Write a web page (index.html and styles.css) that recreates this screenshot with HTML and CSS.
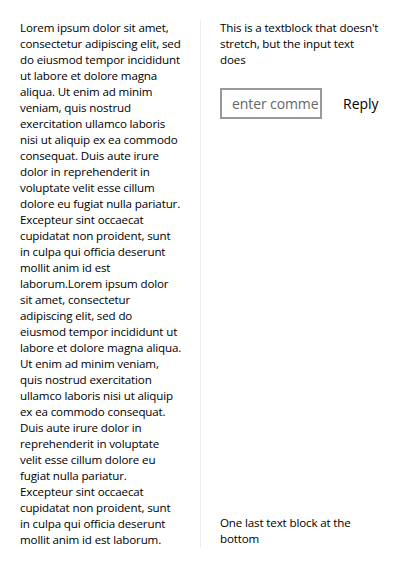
FILE: index.html
```html
<!DOCTYPE html>
<html>
<head>
<meta charset="utf-8">
<link rel="stylesheet" href="styles.css">
</head>
<body>
<div class="page">
  <div class="left">
    <p class="body-text">Lorem ipsum dolor sit amet,<br>consectetur adipiscing elit, sed<br>do eiusmod tempor incididunt<br>ut labore et dolore magna<br>aliqua. Ut enim ad minim<br>veniam, quis nostrud<br>exercitation ullamco laboris<br>nisi ut aliquip ex ea commodo<br>consequat. Duis aute irure<br>dolor in reprehenderit in<br>voluptate velit esse cillum<br>dolore eu fugiat nulla pariatur.<br>Excepteur sint occaecat<br>cupidatat non proident, sunt<br>in culpa qui officia deserunt<br>mollit anim id est<br>laborum.Lorem ipsum dolor<br>sit amet, consectetur<br>adipiscing elit, sed do<br>eiusmod tempor incididunt ut<br>labore et dolore magna aliqua.<br>Ut enim ad minim veniam,<br>quis nostrud exercitation<br>ullamco laboris nisi ut aliquip<br>ex ea commodo consequat.<br>Duis aute irure dolor in<br>reprehenderit in voluptate<br>velit esse cillum dolore eu<br>fugiat nulla pariatur.<br>Excepteur sint occaecat<br>cupidatat non proident, sunt<br>in culpa qui officia deserunt<br>mollit anim id est laborum.</p>
  </div>
  <div class="divider"></div>
  <div class="right">
    <p class="body-text">This is a textblock that doesn't<br>stretch, but the input text<br>does</p>
    <div class="comment-row">
      <div class="comment-input"><span class="placeholder">enter comme</span></div>
      <span class="reply">Reply</span>
    </div>
    <p class="body-text bottom-text">One last text block at the<br>bottom</p>
  </div>
</div>
</body>
</html>
```

FILE: styles.css
```css
html, body {
  margin: 0;
  padding: 0;
  background: #ffffff;
}
body {
  width: 400px;
  height: 567px;
  overflow: hidden;
  font-family: "Open Sans", "Noto Sans", sans-serif;
  color: #000;
}
.page {
  display: flex;
  height: 567px;
  box-sizing: border-box;
  padding: 20px 0 20px 20px;
}
.left {
  width: 180px;
  flex: none;
}
.body-text {
  margin: 0;
  font-size: 11.6px;
  letter-spacing: -0.15px;
  line-height: 16px;
  white-space: nowrap;
}
.divider {
  width: 1px;
  background: #ececec;
  flex: none;
}
.right {
  flex: 1;
  display: flex;
  flex-direction: column;
  padding-left: 19px;
}
.comment-row {
  display: flex;
  align-items: center;
  margin-top: 20px;
}
.comment-input {
  width: 102px;
  height: 31px;
  box-sizing: border-box;
  border: 2px solid #999999;
  overflow: hidden;
  padding-left: 10px;
  display: flex;
  align-items: center;
  white-space: nowrap;
}
.placeholder {
  font-size: 14px;
  letter-spacing: -0.1px;
  color: #666666;
}
.reply {
  font-size: 14px;
  margin-left: 21px;
}
.bottom-text {
  margin-top: auto;
}
```
